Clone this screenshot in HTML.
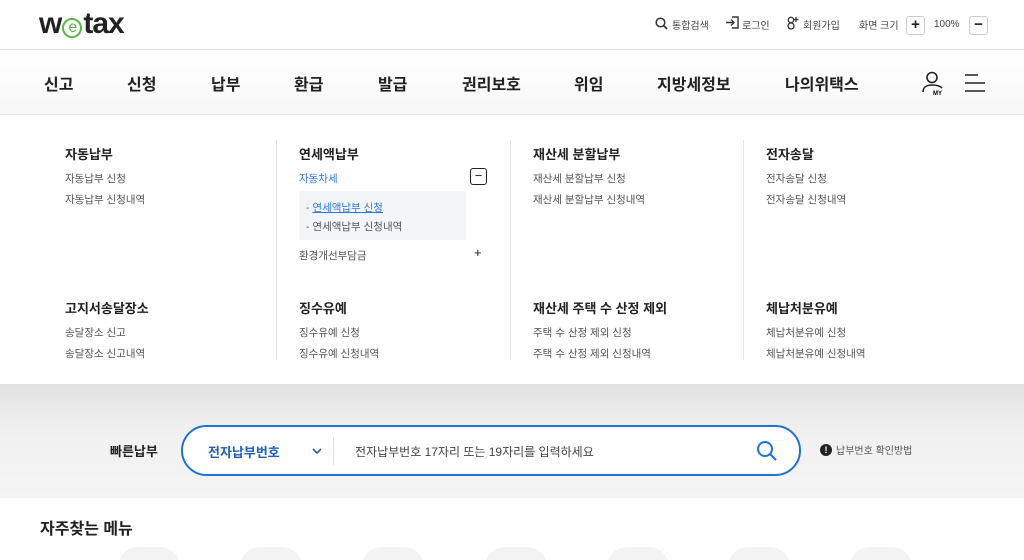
<!DOCTYPE html>
<html><head><meta charset="utf-8"><style>
*{margin:0;padding:0;box-sizing:border-box}
html,body{width:1024px;height:560px;overflow:hidden}
body{background:#fff;font-family:"Liberation Sans","Noto Sans CJK KR",sans-serif;color:#222;position:relative}
.a{position:absolute;white-space:nowrap}
.top{position:absolute;left:0;top:0;width:1024px;height:50px;border-bottom:1px solid #e3e3e3;background:#fff}
.nav{position:absolute;left:0;top:51px;width:1024px;height:64px;background:linear-gradient(#fff,#f7f7f7);border-bottom:1px solid #e3e3e3}
.nav span{position:absolute;top:20px;font-size:16px;font-weight:bold;color:#222}
.util{font-size:10px;color:#444;top:17px}
.panel{position:absolute;left:0;top:116px;width:1024px;height:268px;background:#fff}
.h{font-size:13px;font-weight:bold;color:#222}
.i{font-size:10.5px;color:#555}
.vl{position:absolute;width:1px;background:#e6e6e6}
.gray{position:absolute;left:0;top:384px;width:1024px;height:114px;background:linear-gradient(#e2e2e2,#f0f0f0 40%,#f5f5f5)}
.circ{position:absolute;top:547px;width:62px;height:40px;border-radius:30px;background:#f3f3f3}
</style></head><body>
<div class="top">
 <div class="a" style="left:39px;top:9px;font-size:30px;font-weight:bold;color:#222;letter-spacing:-1px;line-height:30px">w<span style="display:inline-block;width:20px;height:20px;border:2px solid #5ab946;border-radius:50%;color:#5ab946;font-size:16px;line-height:15px;text-align:center;vertical-align:1px;font-weight:normal;margin:0 1px">e</span>tax</div>
 <svg class="a" style="left:655px;top:17px" width="13" height="13" viewBox="0 0 13 13"><circle cx="5.5" cy="5.5" r="4.3" fill="none" stroke="#333" stroke-width="1.5"/><path d="M8.6 8.6L12 12" stroke="#333" stroke-width="1.6"/></svg>
 <div class="a util" style="left:672px">통합검색</div>
 <svg class="a" style="left:725px;top:16px" width="15" height="13" viewBox="0 0 15 13"><path d="M7 1h6v11H7M1 6.5h8M6 3.5l3 3-3 3" fill="none" stroke="#333" stroke-width="1.4"/></svg>
 <div class="a util" style="left:742px">로그인</div>
 <svg class="a" style="left:786px;top:16px" width="14" height="14" viewBox="0 0 14 14"><circle cx="5" cy="4" r="2.7" fill="none" stroke="#333" stroke-width="1.3"/><circle cx="5" cy="10" r="3" fill="none" stroke="#333" stroke-width="1.3"/><path d="M10 1v5M7.5 3.5h5" stroke="#333" stroke-width="1.3"/></svg>
 <div class="a util" style="left:803px">회원가입</div>
 <div class="a util" style="left:859px">화면 크기</div>
 <div class="a" style="left:906px;top:16px;width:19px;height:19px;border:1px solid #ccc;border-radius:3px;font-size:15px;line-height:16px;text-align:center;font-weight:bold">+</div>
 <div class="a util" style="left:934px;top:19px">100%</div>
 <div class="a" style="left:969px;top:16px;width:19px;height:19px;border:1px solid #ccc;border-radius:3px;font-size:15px;line-height:16px;text-align:center;font-weight:bold">−</div>
</div>
<div class="nav">
 <span style="left:44px">신고</span><span style="left:127px">신청</span><span style="left:211px">납부</span><span style="left:294px">환급</span><span style="left:378px">발급</span><span style="left:462px">권리보호</span><span style="left:574px">위임</span><span style="left:657px">지방세정보</span><span style="left:785px">나의위택스</span>
 <svg class="a" style="left:920px;top:20px" width="26" height="26" viewBox="0 0 26 26"><circle cx="12" cy="6.5" r="5" fill="none" stroke="#222" stroke-width="1.6"/><path d="M3 21c0-5 4-7 9-7s8 1 10 3" fill="none" stroke="#222" stroke-width="1.6"/><text x="13" y="24" font-size="6" font-weight="bold" font-family="Liberation Sans">MY</text></svg>
 <svg class="a" style="left:964px;top:22px" width="22" height="20" viewBox="0 0 22 20"><path d="M1 2h13M1 10h20M1 18h20" stroke="#222" stroke-width="1.6"/></svg>
</div>
<div class="panel">
 <div class="vl" style="left:276px;top:24px;height:220px"></div>
 <div class="vl" style="left:510px;top:24px;height:220px"></div>
 <div class="vl" style="left:743px;top:24px;height:220px"></div>
 <div class="a h" style="left:65px;top:28px">자동납부</div>
 <div class="a i" style="left:65px;top:55px">자동납부 신청</div>
 <div class="a i" style="left:65px;top:76px">자동납부 신청내역</div>
 <div class="a h" style="left:299px;top:28px">연세액납부</div>
 <div class="a i" style="left:299px;top:55px;color:#2a7be0">자동차세</div>
 <div class="a" style="left:470px;top:52px;width:17px;height:17px;border:1.5px solid #222;border-radius:3px;font-size:13px;line-height:13px;text-align:center">−</div>
 <div class="a" style="left:299px;top:75px;width:167px;height:49px;background:#f3f5f8"></div>
 <div class="a i" style="left:306px;top:84px;color:#2a7be0">- <u>연세액납부 신청</u></div>
 <div class="a i" style="left:306px;top:103px">- 연세액납부 신청내역</div>
 <div class="a i" style="left:299px;top:132px">환경개선부담금</div>
 <div class="a" style="left:474px;top:129px;font-size:13px">+</div>
 <div class="a h" style="left:533px;top:28px">재산세 분할납부</div>
 <div class="a i" style="left:533px;top:55px">재산세 분할납부 신청</div>
 <div class="a i" style="left:533px;top:76px">재산세 분할납부 신청내역</div>
 <div class="a h" style="left:766px;top:28px">전자송달</div>
 <div class="a i" style="left:766px;top:55px">전자송달 신청</div>
 <div class="a i" style="left:766px;top:76px">전자송달 신청내역</div>
 <div class="a h" style="left:65px;top:182px">고지서송달장소</div>
 <div class="a i" style="left:65px;top:209px">송달장소 신고</div>
 <div class="a i" style="left:65px;top:230px">송달장소 신고내역</div>
 <div class="a h" style="left:299px;top:182px">징수유예</div>
 <div class="a i" style="left:299px;top:209px">징수유예 신청</div>
 <div class="a i" style="left:299px;top:230px">징수유예 신청내역</div>
 <div class="a h" style="left:533px;top:182px">재산세 주택 수 산정 제외</div>
 <div class="a i" style="left:533px;top:209px">주택 수 산정 제외 신청</div>
 <div class="a i" style="left:533px;top:230px">주택 수 산정 제외 신청내역</div>
 <div class="a h" style="left:766px;top:182px">체납처분유예</div>
 <div class="a i" style="left:766px;top:209px">체납처분유예 신청</div>
 <div class="a i" style="left:766px;top:230px">체납처분유예 신청내역</div>
</div>
<div class="gray">
 <div class="a" style="left:110px;top:57px;font-size:13px;font-weight:bold;color:#222">빠른납부</div>
 <div class="a" style="left:181px;top:41px;width:620px;height:51px;border:2px solid #1f73d6;border-radius:26px;background:#fff">
  <div class="a" style="left:25px;top:15px;font-size:13px;font-weight:bold;color:#1f5fb8">전자납부번호</div>
  <svg class="a" style="left:128px;top:19px" width="12" height="10" viewBox="0 0 12 10"><path d="M2 3l4 4 4-4" fill="none" stroke="#1f5fb8" stroke-width="1.6"/></svg>
  <div class="a" style="left:150px;top:10px;width:1px;height:28px;background:#e3e3e3"></div>
  <div class="a" style="left:172px;top:16px;font-size:12px;color:#444">전자납부번호 17자리 또는 19자리를 입력하세요</div>
  <svg class="a" style="left:573px;top:13px" width="22" height="22" viewBox="0 0 22 22"><circle cx="9" cy="9" r="7" fill="none" stroke="#1f73d6" stroke-width="2"/><path d="M14 14l6 6" stroke="#1f73d6" stroke-width="2"/></svg>
 </div>
 <div class="a" style="left:820px;top:60px;width:12px;height:12px;border-radius:50%;background:#222;color:#fff;font-size:9px;line-height:12px;text-align:center;font-weight:bold">!</div>
 <div class="a" style="left:836px;top:58px;font-size:10px;color:#555">납부번호 확인방법</div>
</div>
<div class="a" style="left:40px;top:515px;font-size:16px;font-weight:bold;color:#222">자주찾는 메뉴</div>
<div class="circ" style="left:118px"></div><div class="circ" style="left:240px"></div><div class="circ" style="left:362px"></div><div class="circ" style="left:485px"></div><div class="circ" style="left:607px"></div><div class="circ" style="left:728px"></div><div class="circ" style="left:850px"></div>
</body></html>
